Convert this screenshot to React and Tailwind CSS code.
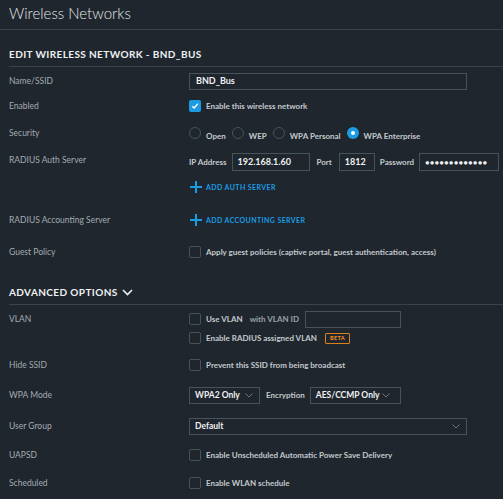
import React from "react";

const Check = ({ checked }) =>
  checked ? (
    <span className="w-[12px] h-[12px] rounded-[2px] bg-[#1b9ce2] flex items-center justify-center shrink-0">
      <svg width="8" height="8" viewBox="0 0 8 8">
        <path d="M1.2 4.2 L3.2 6 L6.8 1.8" stroke="white" strokeWidth="1.4" fill="none" />
      </svg>
    </span>
  ) : (
    <span className="w-[12px] h-[12px] rounded-[2px] border border-[#4a5259] shrink-0" />
  );

const Radio = ({ checked }) =>
  checked ? (
    <span className="w-[12px] h-[12px] rounded-full bg-[#1b9ce2] flex items-center justify-center shrink-0">
      <span className="w-[4px] h-[4px] rounded-full bg-white" />
    </span>
  ) : (
    <span className="w-[12px] h-[12px] rounded-full border border-[#4a5259] shrink-0" />
  );

const Chevron = () => (
  <svg width="8" height="5" viewBox="0 0 8 5">
    <path d="M0.5 0.5 L4 4 L7.5 0.5" stroke="#6b747b" strokeWidth="1" fill="none" />
  </svg>
);

const Plus = () => (
  <svg width="12" height="12" viewBox="0 0 12 12" className="shrink-0">
    <path d="M6 0 V12 M0 6 H12" stroke="#1b9ce2" strokeWidth="2" />
  </svg>
);

const Label = ({ children }) => (
  <div className="w-[180px] shrink-0 text-[8.5px] text-[#a3abb2]">{children}</div>
);

const Opt = ({ children }) => (
  <span className="text-[8px] font-bold text-[#c4c9cd]">{children}</span>
);

export default function App() {
  return (
    <div className="w-[503px] h-[499px] overflow-hidden bg-[#1f262d] font-['Lato',sans-serif] whitespace-nowrap">
      <div className="h-[30px] border-b border-[#3a434a] pl-[9px] pb-[3px] flex items-center">
        <span className="text-[15px] font-light text-[#e2e6e9] leading-none">Wireless Networks</span>
      </div>
      <div className="pl-[9px]">
        <div className="h-[37px] pt-[12px] border-b border-[#3a434a] flex items-center">
          <span className="text-[10px] font-bold tracking-[0.4px] text-[#eef0f2]">EDIT WIRELESS NETWORK - BND_BUS</span>
        </div>

        <div className="h-[28px] flex items-center">
          <Label>Name/SSID</Label>
          <div className="w-[278px] h-[17px] border border-[#4a5259] flex items-center pl-[6px] text-[9px] font-bold text-[#eef0f2]">BND_Bus</div>
        </div>

        <div className="h-[22px] flex items-center">
          <Label>Enabled</Label>
          <div className="flex items-center gap-[5px]">
            <Check checked />
            <Opt>Enable this wireless network</Opt>
          </div>
        </div>

        <div className="h-[32px] flex items-center">
          <Label>Security</Label>
          <div className="flex items-center">
            <Radio />
            <span className="ml-[5px] mr-[6px]"><Opt>Open</Opt></span>
            <Radio />
            <span className="ml-[5px] mr-[6px]"><Opt>WEP</Opt></span>
            <Radio />
            <span className="ml-[5px] mr-[6px]"><Opt>WPA Personal</Opt></span>
            <Radio checked />
            <span className="ml-[5px]"><Opt>WPA Enterprise</Opt></span>
          </div>
        </div>

        <div className="h-[26px] flex items-center">
          <Label><span className="relative top-[-2px]">RADIUS Auth Server</span></Label>
          <div className="flex items-center">
            <span className="text-[8px] font-bold text-[#c4c9cd] mr-[5px]">IP Address</span>
            <div className="w-[78px] h-[18px] border border-[#4a5259] flex items-center pl-[5px] text-[9px] font-bold tabular-nums text-[#eef0f2]">192.168.1.60</div>
            <span className="text-[8px] font-bold text-[#c4c9cd] ml-[7px] mr-[7px]">Port</span>
            <div className="w-[36px] h-[18px] border border-[#4a5259] flex items-center pl-[5px] text-[9px] font-bold tabular-nums text-[#eef0f2]">1812</div>
            <span className="text-[8px] font-bold text-[#c4c9cd] ml-[5px] mr-[5px]">Password</span>
            <div className="w-[80px] h-[18px] border border-[#4a5259] flex items-center pl-[5px] text-[7px] tracking-[0.6px] text-[#eef0f2]">●●●●●●●●●●●●●</div>
          </div>
        </div>

        <div className="h-[24px] flex items-center">
          <Label />
          <div className="flex items-center gap-[4px] pl-[1px]">
            <Plus />
            <span className="text-[7px] font-bold tracking-[0.4px] text-[#1b9ce2]">ADD AUTH SERVER</span>
          </div>
        </div>

        <div className="h-[42px] flex items-center">
          <Label>RADIUS Accounting Server</Label>
          <div className="flex items-center gap-[4px] pl-[1px]">
            <Plus />
            <span className="text-[7px] font-bold tracking-[0.4px] text-[#1b9ce2]">ADD ACCOUNTING SERVER</span>
          </div>
        </div>

        <div className="h-[22px] flex items-center">
          <Label>Guest Policy</Label>
          <div className="flex items-center gap-[5px]">
            <Check />
            <Opt>Apply guest policies (captive portal, guest authentication, access)</Opt>
          </div>
        </div>

        <div className="h-[42px] pt-[18px] border-b border-[#3a434a] flex items-center gap-[4px]">
          <span className="text-[10px] font-bold tracking-[0.4px] text-[#eef0f2]">ADVANCED OPTIONS</span>
          <svg width="11" height="7" viewBox="0 0 11 7">
            <path d="M1 1 L5.5 5.5 L10 1" stroke="#eef0f2" strokeWidth="1.6" fill="none" />
          </svg>
        </div>

        <div className="pt-[5px] h-[45px] flex items-start">
          <div className="h-[18px] flex items-center"><Label>VLAN</Label></div>
          <div className="flex flex-col gap-[1px]">
            <div className="h-[18px] flex items-center gap-[5px]">
              <Check />
              <Opt>Use VLAN</Opt>
              <span className="ml-[2px] text-[8px] font-bold text-[#9aa2a9]">with VLAN ID</span>
              <div className="ml-[1px] w-[96px] h-[17px] border border-[#4a5259]" />
            </div>
            <div className="h-[18px] flex items-center gap-[5px]">
              <Check />
              <Opt>Enable RADIUS assigned VLAN</Opt>
              <span className="ml-[3px] h-[11px] px-[4px] border border-[#d9801a] rounded-[1px] flex items-center text-[5.5px] font-black text-[#f08a1c] tracking-[0.3px]">BETA</span>
            </div>
          </div>
        </div>

        <div className="h-[30px] flex items-center">
          <Label>Hide SSID</Label>
          <div className="flex items-center gap-[5px]">
            <Check />
            <Opt>Prevent this SSID from being broadcast</Opt>
          </div>
        </div>

        <div className="h-[30px] flex items-center">
          <Label>WPA Mode</Label>
          <div className="flex items-center">
            <div className="w-[71px] h-[17px] border border-[#4a5259] flex items-center justify-between pl-[5px] pr-[6px]">
              <span className="text-[8.5px] font-bold text-[#eef0f2]">WPA2 Only</span>
              <Chevron />
            </div>
            <span className="ml-[6px] mr-[5px] text-[8px] font-bold text-[#c4c9cd]">Encryption</span>
            <div className="w-[91px] h-[17px] border border-[#4a5259] flex items-center justify-between pl-[5px] pr-[10px]">
              <span className="text-[8.5px] font-bold text-[#eef0f2]">AES/CCMP Only</span>
              <Chevron />
            </div>
          </div>
        </div>

        <div className="h-[32px] flex items-center">
          <Label>User Group</Label>
          <div className="w-[278px] h-[17px] border border-[#4a5259] flex items-center justify-between pl-[5px] pr-[6px]">
            <span className="text-[8.5px] font-bold text-[#eef0f2]">Default</span>
            <Chevron />
          </div>
        </div>

        <div className="h-[26px] flex items-center">
          <Label>UAPSD</Label>
          <div className="flex items-center gap-[5px]">
            <Check />
            <Opt>Enable Unscheduled Automatic Power Save Delivery</Opt>
          </div>
        </div>

        <div className="h-[30px] flex items-center">
          <Label>Scheduled</Label>
          <div className="flex items-center gap-[5px]">
            <Check />
            <Opt>Enable WLAN schedule</Opt>
          </div>
        </div>
      </div>
    </div>
  );
}
